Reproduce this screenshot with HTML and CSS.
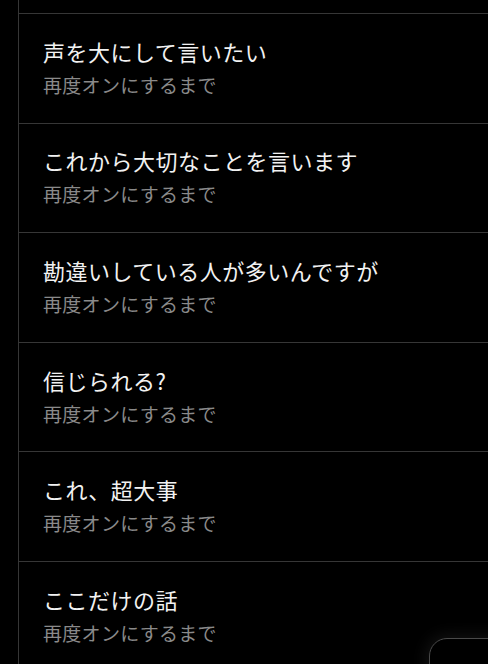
FILE: index.html
```html
<!DOCTYPE html>
<html lang="ja">
<head>
<meta charset="utf-8">
<link rel="stylesheet" href="styles.css">
</head>
<body>
<div class="app">
  <aside class="rail"></aside>
  <main class="list">
    <div class="item">
      <div class="title">声を大にして言いたい</div>
      <div class="sub">再度オンにするまで</div>
    </div>
    <div class="item">
      <div class="title">これから大切なことを言います</div>
      <div class="sub">再度オンにするまで</div>
    </div>
    <div class="item">
      <div class="title">勘違いしている人が多いんですが</div>
      <div class="sub">再度オンにするまで</div>
    </div>
    <div class="item">
      <div class="title">信じられる?</div>
      <div class="sub">再度オンにするまで</div>
    </div>
    <div class="item">
      <div class="title">これ、超大事</div>
      <div class="sub">再度オンにするまで</div>
    </div>
    <div class="item">
      <div class="title">ここだけの話</div>
      <div class="sub">再度オンにするまで</div>
    </div>
  </main>
  <div class="fab"></div>
</div>
</body>
</html>
```
FILE: styles.css
```css
html, body {
  margin: 0;
  padding: 0;
  background: #000;
  height: 100%;
  overflow: hidden;
}
.app {
  display: flex;
  height: 664px;
  overflow: hidden;
  position: relative;
  font-family: "Noto Sans CJK JP", "Noto Sans", sans-serif;
}
.rail {
  width: 18px;
  flex: none;
  background: #000;
  border-right: 1px solid #363636;
}
.list {
  flex: 1;
  padding-top: 13px;
  background: #000;
}
.item {
  box-sizing: border-box;
  height: 109.6px;
  border-top: 1px solid #363636;
  padding-left: 24px;
  padding-bottom: 3px;
  display: flex;
  flex-direction: column;
  justify-content: center;
}
.title {
  color: #f2f2f2;
  font-size: 22px;
  line-height: 30px;
  letter-spacing: 0.5px;
  margin-bottom: 6px;
}
.sub {
  color: #8a8a8a;
  font-size: 19px;
  line-height: 26px;
  letter-spacing: 0.3px;
}
.fab {
  position: absolute;
  left: 429px;
  top: 638px;
  width: 120px;
  height: 60px;
  border-radius: 18px;
  background: #000;
  border: 1px solid #4a4a4a;
  box-shadow: 0 0 16px 3px rgba(255, 255, 255, 0.07);
}
```
